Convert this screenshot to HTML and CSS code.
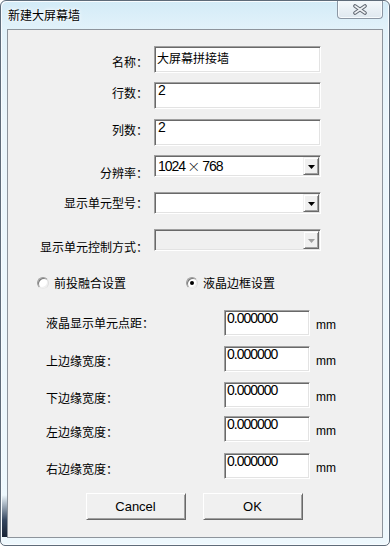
FILE: index.html
```html
<!DOCTYPE html>
<html lang="zh-CN">
<head>
<meta charset="utf-8">
<title>新建大屏幕墙</title>
<link rel="stylesheet" href="styles.css">
</head>
<body>
<div class="window">
  <div class="titlebar">
    <span class="title">新建大屏幕墙</span>
    <span class="close">
      <svg width="16" height="11" viewBox="0 0 16 11">
        <path d="M3 2 L13 9 M13 2 L3 9" stroke="#5f6670" stroke-width="3.6" stroke-linecap="round" fill="none"/>
        <path d="M3 2 L13 9 M13 2 L3 9" stroke="#eef1f4" stroke-width="1.6" stroke-linecap="round" fill="none"/>
      </svg>
    </span>
  </div>
  <div class="client">
    <div class="frow row-name">
      <span class="lbl lbl-name">名称<span class="colon">：</span></span>
      <div class="edit edit-cjk">大屏幕拼接墙</div>
    </div>
    <div class="frow row-rows">
      <span class="lbl lbl-up">行数<span class="colon">：</span></span>
      <div class="edit">2</div>
    </div>
    <div class="frow row-cols">
      <span class="lbl lbl-up">列数<span class="colon">：</span></span>
      <div class="edit">2</div>
    </div>
    <div class="frow crow row-res">
      <span class="lbl lbl-res">分辨率<span class="colon">：</span></span>
      <div class="combo">
        <span class="cval">1024<span class="mul">×</span>768</span>
        <span class="cbtn"><svg width="7" height="4" viewBox="0 0 7 4"><polygon points="0,0 7,0 3.5,4" fill="#000"/></svg></span>
      </div>
    </div>
    <div class="frow crow row-model">
      <span class="lbl">显示单元型号<span class="colon">：</span></span>
      <div class="combo">
        <span class="cval"></span>
        <span class="cbtn"><svg width="7" height="4" viewBox="0 0 7 4"><polygon points="0,0 7,0 3.5,4" fill="#000"/></svg></span>
      </div>
    </div>
    <div class="frow crow row-ctrl">
      <span class="lbl lbl-res">显示单元控制方式<span class="colon">：</span></span>
      <div class="combo combo-disabled">
        <span class="cval"></span>
        <span class="cbtn"><svg width="7" height="4" viewBox="0 0 7 4"><polygon points="0,0 7,0 3.5,4" fill="#a0a0a0"/></svg></span>
      </div>
    </div>

    <div class="radios">
      <div class="rgroup rgroup-first">
        <span class="radio"></span>
        <span class="rlabel">前投融合设置</span>
      </div>
      <div class="rgroup">
        <span class="radio checked"><span class="dot"></span></span>
        <span class="rlabel">液晶边框设置</span>
      </div>
    </div>

    <div class="lrow lrow-1">
      <span class="llbl">液晶显示单元点距<span class="colon">：</span></span>
      <div class="edit edit-num">0.000000</div>
      <span class="unit">mm</span>
    </div>
    <div class="lrow lrow-2">
      <span class="llbl off4">上边缘宽度<span class="colon">：</span></span>
      <div class="edit edit-num">0.000000</div>
      <span class="unit">mm</span>
    </div>
    <div class="lrow lrow-3">
      <span class="llbl off6">下边缘宽度<span class="colon">：</span></span>
      <div class="edit edit-num">0.000000</div>
      <span class="unit">mm</span>
    </div>
    <div class="lrow lrow-4">
      <span class="llbl off5">左边缘宽度<span class="colon">：</span></span>
      <div class="edit edit-num">0.000000</div>
      <span class="unit">mm</span>
    </div>
    <div class="lrow lrow-5">
      <span class="llbl off6">右边缘宽度<span class="colon">：</span></span>
      <div class="edit edit-num">0.000000</div>
      <span class="unit">mm</span>
    </div>

    <div class="buttons">
      <button class="btn">Cancel</button>
      <button class="btn">OK</button>
    </div>
  </div>
</div>
</body>
</html>
```

FILE: styles.css
```css
* { box-sizing: border-box; margin: 0; padding: 0; }
html, body { width: 390px; height: 546px; overflow: hidden; background: #ffffff; }
body {
  font-family: "Noto Sans CJK SC", "Liberation Sans", sans-serif;
  font-size: 12px;
  color: #000;
}

.window {
  width: 390px;
  height: 546px;
  border: 1px solid #5e6b79;
  border-radius: 6px 6px 5px 5px;
  display: flex;
  flex-direction: column;
  background:
    linear-gradient(to bottom, rgba(30, 45, 70, 0) 0, #34465f 60%, #172234 100%) left 0 bottom 8px / 6px 42px no-repeat,
    linear-gradient(to bottom, #d3ebf7 0, #e2f2fa 28px, #ebf6fc 120px, #eef8fd 100%);
  box-shadow: inset 1px 1px 0 #f8fcff, inset -1px -1px 0 #f8fcff;
}

.titlebar {
  height: 28px;
  flex: 0 0 28px;
  display: flex;
  justify-content: space-between;
  align-items: flex-start;
  padding: 0 6px 0 7px;
}
.title {
  margin-top: 5px;
  font-size: 12px;
  line-height: 18px;
  color: #000;
  text-shadow: 0 0 5px #ffffff, 0 0 3px #ffffff;
}
.close {
  width: 46px;
  height: 18px;
  border: 1px solid #8c97a4;
  border-top: none;
  border-radius: 0 0 4px 4px;
  background: linear-gradient(to bottom, #f4f8fb 0, #e9f0f5 50%, #dfe8ef 100%);
  box-shadow: inset 0 -1px 0 #f7fbfd, inset 1px 0 0 #f7fbfd, inset -1px 0 0 #f7fbfd;
  display: flex;
  align-items: center;
  justify-content: center;
  padding-bottom: 1px;
}

.client {
  flex: 0 0 509px;
  margin: 0 6px;
  border: 1px solid #8d949c;
  background: #f0f0f0;
  display: flex;
  flex-direction: column;
  padding-top: 16px;
}

.colon { font-family: "Noto Sans CJK TC", "Noto Sans CJK SC", sans-serif; }

/* top form */
.frow {
  display: flex;
  align-items: center;
  height: 27px;
}
.crow { height: 22px; }
.row-rows { margin-top: 9px; }
.row-cols { margin-top: 10px; }
.row-res { margin-top: 9px; }
.row-model { margin-top: 15px; }
.row-ctrl { margin-top: 15px; }

.lbl {
  width: 140px;
  margin-right: 6px;
  text-align: right;
  line-height: 16px;
  white-space: nowrap;
}
.lbl-name { padding-top: 4px; }
.lbl-up { padding-bottom: 6px; }
.lbl-res { padding-top: 14px; }

.edit {
  width: 167px;
  height: 27px;
  background: #ffffff;
  border: 1px solid;
  border-color: #a0a0a0 #ffffff #ffffff #a0a0a0;
  box-shadow: inset 1px 1px 0 #696969, inset -1px -1px 0 #e3e3e3;
  padding: 0 0 0 3px;
  font-family: "Liberation Sans", sans-serif;
  font-size: 14px;
  letter-spacing: -1px;
  line-height: 15px;
  white-space: nowrap;
}
.edit-cjk {
  font-family: "Noto Sans CJK SC", sans-serif;
  font-size: 12px;
  letter-spacing: 0;
  line-height: 16px;
  padding-top: 3px;
  padding-left: 2px;
}
.edit-num {
  width: 86px;
  height: 26px;
  padding-left: 2px;
}

.combo {
  width: 167px;
  height: 22px;
  display: flex;
  background: #ffffff;
  border: 1px solid;
  border-color: #a0a0a0 #ffffff #ffffff #a0a0a0;
  box-shadow: inset 1px 1px 0 #696969, inset -1px -1px 0 #e3e3e3;
  padding: 1px;
}
.combo-disabled { background: #f0f0f0; }
.cval {
  flex: 1;
  padding-left: 2px;
  font-family: "Liberation Sans", sans-serif;
  font-size: 14px;
  letter-spacing: -1px;
  line-height: 17px;
  white-space: nowrap;
}
.mul {
  display: inline-block;
  width: 17px;
  text-align: center;
  letter-spacing: 0;
  font-family: "Noto Sans CJK SC", sans-serif;
  font-size: 13px;
  font-weight: 300;
}
.cbtn {
  width: 16px;
  height: 18px;
  background: #f0f0f0;
  border: 1px solid;
  border-color: #f0f0f0 #696969 #696969 #f0f0f0;
  box-shadow: inset 1px 1px 0 #ffffff, inset -1px -1px 0 #a0a0a0;
  display: flex;
  align-items: center;
  justify-content: center;
  padding-top: 1px;
}

/* radios */
.radios {
  display: flex;
  align-items: center;
  height: 14px;
  margin-top: 25px;
  padding-left: 29px;
}
.rgroup {
  display: flex;
  align-items: center;
  gap: 5px;
}
.rgroup-first { width: 149px; }
.radio {
  width: 12px;
  height: 12px;
  border-radius: 50%;
  background: #ffffff;
  border: 1px solid;
  border-color: #9a9a9a #dcdcdc #e8e8e8 #9a9a9a;
  box-shadow: inset 1px 1px 0 #7a7a7a, inset -1px -1px 0 #efefef;
  display: flex;
  align-items: center;
  justify-content: center;
}
.dot {
  width: 4px;
  height: 4px;
  border-radius: 50%;
  background: #000;
}
.rlabel { line-height: 16px; }

/* lower form */
.lrow {
  display: flex;
  align-items: center;
  height: 26px;
  padding-left: 38px;
}
.lrow-1 { margin-top: 20px; }
.lrow-2 { margin-top: 10px; }
.lrow-3 { margin-top: 10px; }
.lrow-4 { margin-top: 8px; }
.lrow-5 { margin-top: 11px; }
.llbl {
  width: 178px;
  line-height: 16px;
  white-space: nowrap;
}
.off4 { padding-top: 4px; }
.off5 { padding-top: 5px; }
.off6 { padding-top: 6px; }
.unit {
  margin-left: 6px;
  padding-top: 4px;
  font-family: "Liberation Sans", sans-serif;
  font-size: 12px;
}

/* buttons */
.buttons {
  display: flex;
  justify-content: center;
  gap: 17px;
  margin-top: 14px;
  padding-right: 2px;
}
.btn {
  width: 100px;
  height: 27px;
  background: #f0f0f0;
  border: 1px solid;
  border-color: #ffffff #696969 #696969 #ffffff;
  box-shadow: inset 1px 1px 0 #f0f0f0, inset -1px -1px 0 #a0a0a0;
  font-family: "Liberation Sans", sans-serif;
  font-size: 13px;
  color: #000;
  line-height: 16px;
}
```
